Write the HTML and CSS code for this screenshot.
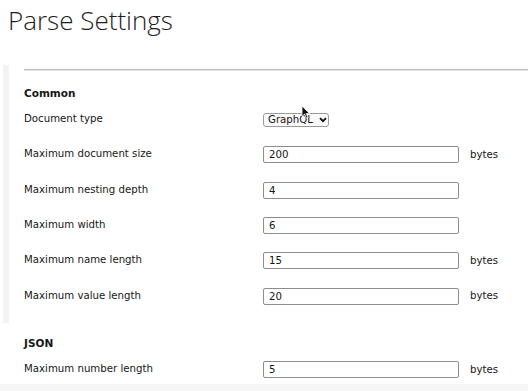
FILE: index.html
```html
<!DOCTYPE html>
<html lang="en">
<head>
    <meta charset="UTF-8">
    <meta name="viewport" content="width=device-width, initial-scale=1.0">
    <title>Parse Settings</title>
    <link rel="stylesheet" href="styles.css">
</head>
<body>
    <h1 class="page-title">Parse Settings</h1>
    <section class="group group-common">
        <div class="rule"></div>
        <h2>Common</h2>
        <div class="row">
            <label for="doctype">Document type</label>
            <div class="select-wrap">
                <select id="doctype">
                    <option>GraphQL</option>
                    <option>JSON</option>
                    <option>XML</option>
                </select>
                <svg class="chevron" width="8" height="6" viewBox="0 0 8 6"><path d="M1 1.2l3 3 3-3" fill="none" stroke="#111" stroke-width="1.9"/></svg>
                <svg class="cursor" width="10" height="14" viewBox="0 0 10 14"><path d="M1 1v10.5l2.6-2.4 1.8 4 1.6-.7-1.8-3.9H8.6z" fill="#111" stroke="#fff" stroke-width="0.8"/></svg>
            </div>
        </div>
        <div class="row">
            <label for="docsize">Maximum document size</label>
            <input type="text" id="docsize" value="200">
            <span class="unit">bytes</span>
        </div>
        <div class="row">
            <label for="depth">Maximum nesting depth</label>
            <input type="text" id="depth" value="4">
        </div>
        <div class="row">
            <label for="width">Maximum width</label>
            <input type="text" id="width" value="6">
        </div>
        <div class="row">
            <label for="namelen">Maximum name length</label>
            <input type="text" id="namelen" value="15">
            <span class="unit">bytes</span>
        </div>
        <div class="row">
            <label for="valuelen">Maximum value length</label>
            <input type="text" id="valuelen" value="20">
            <span class="unit">bytes</span>
        </div>
    </section>
    <section class="group group-json">
        <h2>JSON</h2>
        <div class="row">
            <label for="numlen">Maximum number length</label>
            <input type="text" id="numlen" value="5">
            <span class="unit">bytes</span>
        </div>
    </section>
    <div class="footer-band"></div>
</body>
</html>
```

FILE: styles.css
```css
body {
    margin: 0;
    background: #fff;
    color: #161616;
    font-family: "DejaVu Sans", Verdana, sans-serif;
    font-size: 10.2px;
    overflow: hidden;
}
.page-title {
    margin: 0;
    padding: 4px 0 0 8px;
    height: 65px;
    box-sizing: border-box;
    font-family: "Open Sans", sans-serif;
    font-weight: 300;
    font-size: 26px;
    line-height: 32px;
    color: #1e1e1e;
}
.group {
    margin-left: 3px;
    padding-left: 21px;
}
.group-common {
    border-left: 6px solid #f3f3f3;
    padding-left: 15px;
    padding-top: 4px;
    padding-bottom: 9px;
}
.rule {
    height: 1px;
    border-top: 1px solid #bdbdbd;
    background: #e4e4e4;
}
h2 {
    margin: 14px 0 0;
    font-size: 10.5px;
    line-height: 16px;
    font-weight: bold;
}
.row {
    display: grid;
    grid-template-columns: 239px 196px auto;
    align-items: center;
    height: 35.3px;
}
.group-common h2 + .row {
    margin-top: 1px;
}
.group-json h2 {
    margin-top: 12px;
}
.group-json .row {
    height: 28px;
    margin-top: 5px;
}
label {
    padding-bottom: 2px;
}
input {
    box-sizing: border-box;
    width: 196px;
    height: 17px;
    margin: 0;
    padding: 0 5px;
    border: 1px solid #8d8d8d;
    border-radius: 2px;
    font-family: "DejaVu Sans", Verdana, sans-serif;
    font-size: 10.2px;
    color: #161616;
}
.unit {
    padding-left: 11px;
    padding-bottom: 1px;
}
.select-wrap {
    position: relative;
    width: 66px;
    height: 14px;
}
select {
    appearance: none;
    -webkit-appearance: none;
    box-sizing: border-box;
    width: 66px;
    height: 14px;
    margin: 0;
    padding: 0 0 0 4px;
    border: 1px solid #9a9a9a;
    border-radius: 3px;
    background: #fafafa;
    font-family: "DejaVu Sans", Verdana, sans-serif;
    font-size: 10.2px;
    line-height: 12px;
    color: #161616;
}
.chevron {
    position: absolute;
    right: 2px;
    top: 4px;
    pointer-events: none;
}
.cursor {
    position: absolute;
    left: 38px;
    top: -8px;
}
.footer-band {
    height: 10px;
    background: #f6f6f6;
}
```
